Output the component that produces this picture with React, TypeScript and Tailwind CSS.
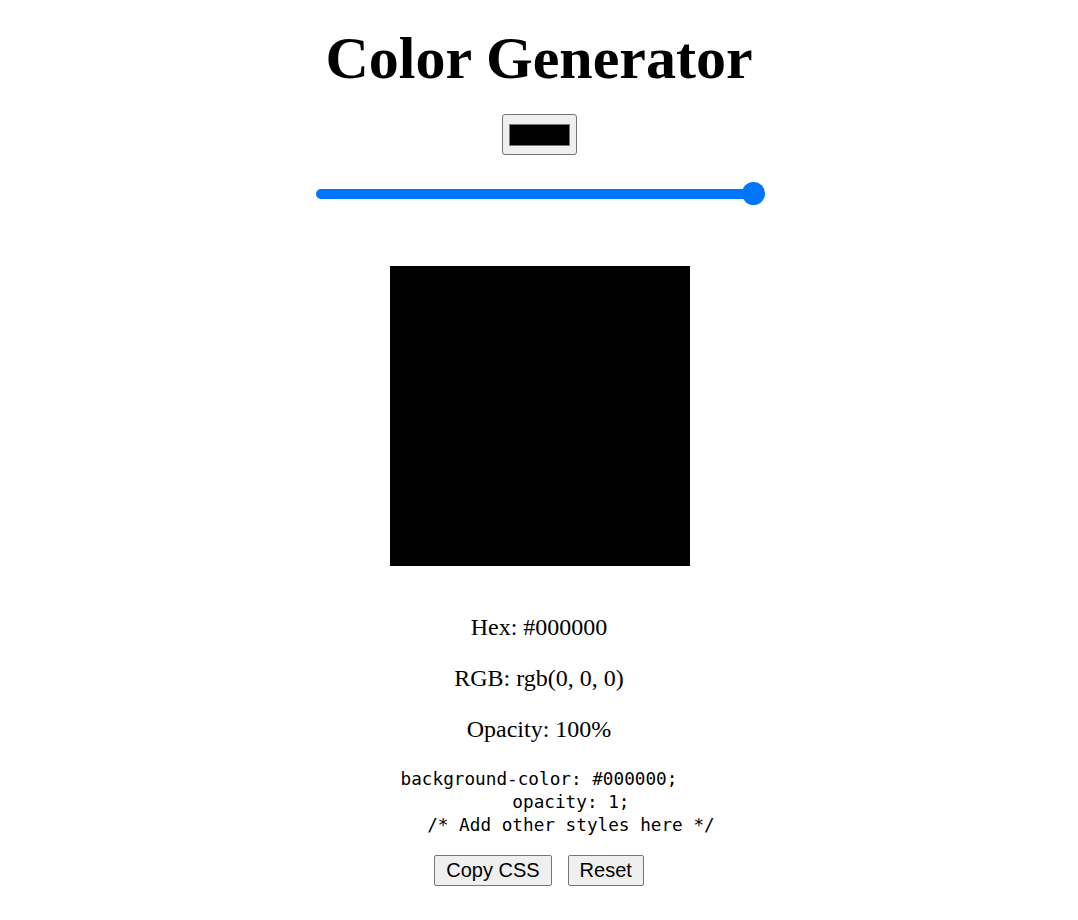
import { useState } from "react"

const serif = "font-['Liberation_Serif','Times_New_Roman',serif]"

export default function App() {
  const [hex, setHex] = useState("#000000")
  const [opacity, setOpacity] = useState(100)

  const r = parseInt(hex.slice(1, 3), 16)
  const g = parseInt(hex.slice(3, 5), 16)
  const b = parseInt(hex.slice(5, 7), 16)

  const css = `background-color: ${hex};\n      opacity: ${opacity / 100};\n      /* Add other styles here */`

  return (
    <div className={`flex min-h-[920px] flex-col items-center bg-white text-black ${serif}`}>
      {/* Title */}
      <h1 className="mt-[24px] text-[60px] font-bold leading-[69px]">Color Generator</h1>

      {/* Picker */}
      <button
        onClick={() => setHex(hex)}
        className="mt-[21px] flex h-[41px] w-[75px] items-center justify-center rounded-[3px] border border-[#767676] bg-[#efefef]"
      >
        <span className="h-[22px] w-[61px] border border-[#777777]" style={{ backgroundColor: hex }} />
      </button>

      {/* Opacity slider */}
      <div className="relative mt-[27px] ml-[2px] flex h-[24px] w-[449px] items-center">
        <div className="h-[10px] w-full rounded-full bg-[#0075ff]" />
        <span
          onClick={() => setOpacity(100)}
          className="absolute top-0 h-[23px] w-[23px] rounded-full bg-[#0075ff]"
          style={{ left: `calc(${opacity}% - 23px)` }}
        />
      </div>

      {/* Preview */}
      <div className="mt-[60px] ml-[2px] h-[300px] w-[300px]" style={{ backgroundColor: hex, opacity: opacity / 100 }} />

      {/* Values */}
      <div className="mt-[48px] flex flex-col items-center gap-[24px] text-[24px] leading-[27px]">
        <p>Hex: {hex}</p>
        <p>RGB: rgb({r}, {g}, {b})</p>
        <p>Opacity: {opacity}%</p>
      </div>

      <pre className="mt-[25px] whitespace-pre text-center font-['DejaVu_Sans_Mono','Liberation_Mono',monospace] text-[17.7px] leading-[23px]">
        {css}
      </pre>

      {/* Actions */}
      <div className="mt-[18px] flex gap-[16px] font-['Liberation_Sans',Arial,sans-serif] text-[20px] leading-[23px]">
        <button className="rounded-[2px] border border-[#767676] bg-[#efefef] px-[11px] py-[3px]">Copy CSS</button>
        <button
          onClick={() => {
            setHex("#000000")
            setOpacity(100)
          }}
          className="rounded-[2px] border border-[#767676] bg-[#efefef] px-[11px] py-[3px]"
        >
          Reset
        </button>
      </div>
    </div>
  )
}
